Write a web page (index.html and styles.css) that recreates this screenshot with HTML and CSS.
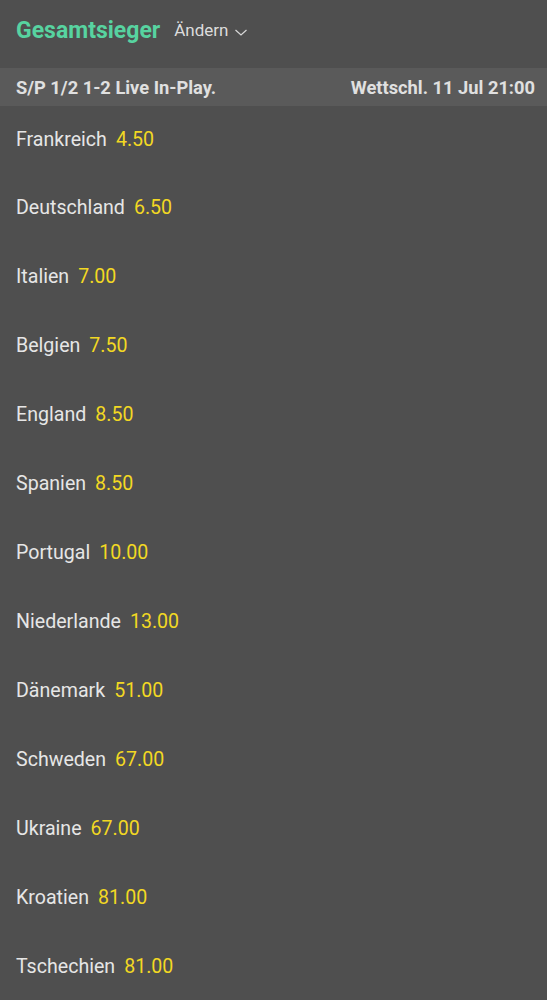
FILE: index.html
```html
<!DOCTYPE html>
<html lang="de">
<head>
  <meta charset="UTF-8">
  <meta name="viewport" content="width=device-width, initial-scale=1.0">
  <title>Gesamtsieger</title>
  <link rel="stylesheet" href="styles.css">
</head>
<body>
  <div class="market">
    <div class="market-head">
      <h1>Gesamtsieger</h1>
      <span class="change">Ändern
        <svg width="14" height="14" viewBox="0 0 14 14"><path d="M1.5 5l5.5 5 5.5-5" fill="none" stroke="#d8d8d8" stroke-width="1.2"/></svg>
      </span>
    </div>
    <div class="market-bar">
      <span>S/P 1/2 1-2 Live In-Play.</span>
      <span>Wettschl. 11 Jul 21:00</span>
    </div>
    <ul class="runners">
      <li><span class="name">Frankreich</span><span class="odds">4.50</span></li>
      <li><span class="name">Deutschland</span><span class="odds">6.50</span></li>
      <li><span class="name">Italien</span><span class="odds">7.00</span></li>
      <li><span class="name">Belgien</span><span class="odds">7.50</span></li>
      <li><span class="name">England</span><span class="odds">8.50</span></li>
      <li><span class="name">Spanien</span><span class="odds">8.50</span></li>
      <li><span class="name">Portugal</span><span class="odds">10.00</span></li>
      <li><span class="name">Niederlande</span><span class="odds">13.00</span></li>
      <li><span class="name">Dänemark</span><span class="odds">51.00</span></li>
      <li><span class="name">Schweden</span><span class="odds">67.00</span></li>
      <li><span class="name">Ukraine</span><span class="odds">67.00</span></li>
      <li><span class="name">Kroatien</span><span class="odds">81.00</span></li>
      <li><span class="name">Tschechien</span><span class="odds">81.00</span></li>
    </ul>
  </div>
</body>
</html>
```
FILE: styles.css
```css
body {
  margin: 0;
  background-color: #4f4f4f;
  font-family: Roboto, "Liberation Sans", sans-serif;
  color: #e6e6e6;
}
.market-head {
  display: flex;
  align-items: center;
  height: 68px;
  padding: 0 16px 8px;
  gap: 14px;
  box-sizing: border-box;
}
.market-head h1 {
  margin: 0;
  font-size: 23px;
  font-weight: bold;
  color: #57d3a0;
}
.change {
  display: flex;
  align-items: center;
  gap: 6px;
  font-size: 17px;
  color: #dcdcdc;
}
.change svg {
  margin-top: 3px;
}
.market-bar {
  display: flex;
  justify-content: space-between;
  align-items: center;
  height: 38px;
  padding: 0 12px 0 16px;
  background-color: #5a5a5a;
  font-size: 18.3px;
  font-weight: bold;
  color: #e0e0e0;
}
.runners {
  list-style: none;
  margin: 0;
  padding: 0;
}
.runners li {
  display: flex;
  align-items: center;
  gap: 9px;
  height: 69px;
  padding: 0 16px;
  font-size: 19.6px;
}
.runners li:first-child {
  height: 67px;
}
.odds {
  color: #f2d823;
}
```
